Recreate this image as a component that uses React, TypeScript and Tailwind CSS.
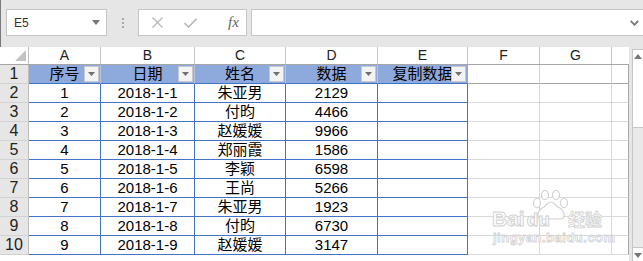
import React from "react";

type Col = { letter: string; width: number };

const cols: Col[] = [
  { letter: "A", width: 72 },
  { letter: "B", width: 94 },
  { letter: "C", width: 91 },
  { letter: "D", width: 92 },
  { letter: "E", width: 90 },
  { letter: "F", width: 72 },
  { letter: "G", width: 72 },
];

const headers = ["序号", "日期", "姓名", "数据", "复制数据"];

const rows: string[][] = [
  ["1", "2018-1-1", "朱亚男", "2129"],
  ["2", "2018-1-2", "付昀", "4466"],
  ["3", "2018-1-3", "赵媛媛", "9966"],
  ["4", "2018-1-4", "郑丽霞", "1586"],
  ["5", "2018-1-5", "李颖", "6598"],
  ["6", "2018-1-6", "王尚", "5266"],
  ["7", "2018-1-7", "朱亚男", "1923"],
  ["8", "2018-1-8", "付昀", "6730"],
  ["9", "2018-1-9", "赵媛媛", "3147"],
];

const FilterButton = () => (
  <div className="absolute right-[1px] top-[1px] w-[15px] h-[16px] bg-[#f3f3f3] border border-[#c8c8c8] flex items-center justify-center">
    <svg width="7" height="4" viewBox="0 0 7 4">
      <path d="M0 0 L7 0 L3.5 4 Z" fill="#707070" />
    </svg>
  </div>
);

const FormulaBar = () => (
  <div className="h-[47px] border-l border-[#7a7a7a] pt-[9px] flex items-start">
    <div className="ml-[5px] w-[101px] h-[27px] bg-white border border-[#c6c6c6] flex items-center justify-between pl-[7px] pr-[6px]">
      <span className="text-[12px] text-[#333]">E5</span>
      <svg width="8" height="5" viewBox="0 0 8 5">
        <path d="M0 0 L8 0 L4 5 Z" fill="#777" />
      </svg>
    </div>
    <div className="w-[31px] h-[27px] flex flex-col items-center justify-center gap-[2px]">
      <div className="w-[2px] h-[2px] bg-[#a8a8a8]" />
      <div className="w-[2px] h-[2px] bg-[#a8a8a8]" />
      <div className="w-[2px] h-[2px] bg-[#a8a8a8]" />
    </div>
    <div className="w-[109px] h-[27px] bg-white border border-[#c6c6c6] flex items-center pl-[13px] gap-[21px]">
      <svg width="11" height="11" viewBox="0 0 11 11">
        <path d="M0.5 0.5 L10.5 10.5 M10.5 0.5 L0.5 10.5" stroke="#b8b8b8" strokeWidth="1.4" />
      </svg>
      <svg width="13" height="10" viewBox="0 0 13 10">
        <path d="M0.5 5 L4.5 9 L12.5 0.8" stroke="#b8b8b8" strokeWidth="1.6" fill="none" />
      </svg>
      <span className="font-['Liberation_Serif',serif] italic text-[15px] text-[#666] leading-none ml-[10px]">
        fx
      </span>
    </div>
    <div className="ml-[4px] flex-1 h-[27px] bg-white border border-[#c6c6c6] border-r-0 flex items-center justify-end pr-[4px]">
      <svg width="9" height="6" viewBox="0 0 9 6">
        <path d="M0.8 0.8 L4.5 4.8 L8.2 0.8" stroke="#777" strokeWidth="1.8" fill="none" />
      </svg>
    </div>
  </div>
);

const ColumnHeader = () => (
  <div className="flex h-[18px] border-b border-[#a6a6a6]">
    <div className="w-[29px] border-r border-[#bdbdbd] relative">
      <svg className="absolute left-[15px] top-[3px]" width="11" height="11" viewBox="0 0 11 11">
        <path d="M11 0 L11 11 L0 11 Z" fill="#c3c3c3" />
      </svg>
    </div>
    {cols.map((c) => (
      <div
        key={c.letter}
        style={{ width: c.width }}
        className="border-r border-[#c6c6c6] flex items-center justify-center text-[14px] text-[#222]"
      >
        {c.letter}
      </div>
    ))}
    <div className="w-[17px]" />
  </div>
);

const RowHead = ({ n }: { n: number }) => (
  <div className="w-[29px] shrink-0 border-r border-b border-r-[#bdbdbd] border-b-[#d2d2d2] bg-[#e6e6e6] flex items-center justify-center text-[16px] text-[#222]">
    {n}
  </div>
);

const Sheet = () => (
  <div className="w-[629px] bg-white">
    <ColumnHeader />
    <div className="flex h-[19px]">
      <RowHead n={1} />
      {cols.map((c, i) =>
        i < 5 ? (
          <div
            key={c.letter}
            style={{ width: c.width }}
            className={
              "relative bg-[#8ea9db] border-b border-[#4472c4] flex items-center justify-center text-[15px] text-black " +
              (i < 4 ? "border-r border-r-[#b4c6e7]" : "border-r border-r-[#a6a6a6]")
            }
          >
            {headers[i]}
            <FilterButton />
          </div>
        ) : (
          <div
            key={c.letter}
            style={{ width: c.width }}
            className="border-r border-b border-r-[#d4d4d4] border-b-[#a6a6a6]"
          />
        )
      )}
      <div className="w-[17px] border-r border-b border-r-[#a6a6a6] border-b-[#a6a6a6]" />
    </div>
    {rows.map((r, ri) => (
      <div key={ri} className="flex h-[19px]">
        <RowHead n={ri + 2} />
        {cols.map((c, i) =>
          i < 5 ? (
            <div
              key={c.letter}
              style={{ width: c.width }}
              className="border-r border-b border-[#4472c4] flex items-center justify-center text-[15px] text-black"
            >
              {r[i] ?? ""}
            </div>
          ) : (
            <div
              key={c.letter}
              style={{ width: c.width }}
              className="border-r border-b border-[#d9d9d9]"
            />
          )
        )}
        <div className="w-[17px] border-r border-b border-r-[#a6a6a6] border-b-[#d9d9d9]" />
      </div>
    ))}
  </div>
);

const VScroll = () => (
  <div className="ml-[3px] mt-[2px] w-[11px] h-[212px] border-l border-t border-[#c6c6c6] bg-[#e9e9e9] flex flex-col justify-between">
    <div className="h-[78px] bg-white border-b border-[#c6c6c6] flex justify-center pt-[4px]">
      <svg width="8" height="5" viewBox="0 0 8 5">
        <path d="M0 5 L8 5 L4 0 Z" fill="#777" />
      </svg>
    </div>
    <div className="h-[14px] bg-white border-t border-[#c6c6c6] flex justify-center pt-[5px]">
      <svg width="8" height="5" viewBox="0 0 8 5">
        <path d="M0 0 L8 0 L4 5 Z" fill="#777" />
      </svg>
    </div>
  </div>
);

const Watermark = () => (
  <div className="absolute left-[492px] top-[190px] w-[120px] h-[56px] pointer-events-none">
    <svg className="absolute left-[40px] top-[0px]" width="38" height="30" viewBox="0 0 38 30">
      <g fill="white" stroke="#d2d2d2" strokeWidth="1.2">
        <ellipse cx="13" cy="5" rx="3.5" ry="4.5" />
        <ellipse cx="24" cy="5" rx="3.5" ry="4.5" />
        <ellipse cx="5" cy="13" rx="3.5" ry="4.5" />
        <ellipse cx="32" cy="13" rx="3.5" ry="4.5" />
        <path d="M9 29 C4 29 5 20 12 17 C15 15 16 12 19 12 C22 12 23 15 26 17 C33 20 34 29 29 29 Z" />
      </g>
    </svg>
    <div className="absolute left-0 top-[18px] flex items-end leading-none font-['Liberation_Sans',sans-serif] font-bold text-[21px] text-white [-webkit-text-stroke:1px_#d2d2d2]">
      <span>Bai</span>
      <span className="ml-[2px] text-[19px]">du</span>
    </div>
    <div className="absolute left-[76px] top-[20px] leading-none font-['Noto_Sans_CJK_SC',sans-serif] font-bold text-[17px] text-white [-webkit-text-stroke:0.8px_#d2d2d2]">
      经验
    </div>
    <div className="absolute left-[1px] top-[41px] leading-none font-['Liberation_Sans',sans-serif] font-bold text-[13px] text-white [-webkit-text-stroke:0.8px_#d2d2d2] tracking-[0.5px]">
      jingyan.baidu.com
    </div>
  </div>
);

export default function App() {
  return (
    <div className="relative w-[643px] h-[261px] overflow-hidden bg-[#e6e6e6] font-['Liberation_Sans','Noto_Sans_CJK_SC',sans-serif]">
      <FormulaBar />
      <div className="flex">
        <Sheet />
        <VScroll />
      </div>
      <div className="h-[1px] bg-[#d0d0d0] w-[629px]" />
      <div className="h-[10px] pl-[101px] pt-[2px]">
        <div className="w-[75px] h-full bg-white border border-[#c6c6c6]" />
      </div>
      <Watermark />
    </div>
  );
}
